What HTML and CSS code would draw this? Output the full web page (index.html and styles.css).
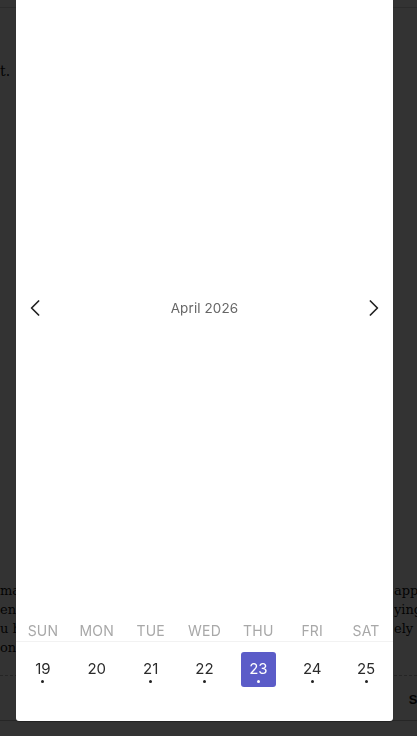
FILE: index.html
```html
<!DOCTYPE html>
<html lang="en">
<head>
<meta charset="utf-8">
<title>Calendar</title>
<link rel="stylesheet" href="styles.css">
</head>
<body>
<div class="page">
  <div class="page-top"></div>
  <div class="page-lead"><span>t.</span></div>
  <div class="page-text">
    <div class="line"><span class="l">may</span><span class="r">applied</span></div>
    <div class="line"><span class="l">ent</span><span class="r">ying</span></div>
    <div class="line"><span class="l">u ha</span><span class="r">ely by</span></div>
    <div class="line"><span class="l">on a</span><span class="r"></span></div>
  </div>
  <div class="page-rule"></div>
  <div class="page-action"><span>Save</span></div>
  <div class="page-bottom"></div>
</div>

<div class="overlay">
  <div class="sheet">
    <div class="month-area">
      <div class="month-header">
        <button class="nav" aria-label="Previous month">
          <svg width="10" height="16" viewBox="0 0 10 16"><path d="M8.6 1 L1.6 8 L8.6 15" fill="none" stroke="#222" stroke-width="1.7" stroke-linecap="round" stroke-linejoin="round"/></svg>
        </button>
        <div class="month-title">April 2026</div>
        <button class="nav" aria-label="Next month">
          <svg width="10" height="16" viewBox="0 0 10 16"><path d="M1.4 1 L8.4 8 L1.4 15" fill="none" stroke="#222" stroke-width="1.7" stroke-linecap="round" stroke-linejoin="round"/></svg>
        </button>
      </div>
    </div>
    <div class="weekdays">
      <span>SUN</span><span>MON</span><span>TUE</span><span>WED</span><span>THU</span><span>FRI</span><span>SAT</span>
    </div>
    <div class="week">
      <div class="day"><span class="num">19</span><span class="dot"></span></div>
      <div class="day"><span class="num">20</span><span class="dot none"></span></div>
      <div class="day"><span class="num">21</span><span class="dot"></span></div>
      <div class="day"><span class="num">22</span><span class="dot"></span></div>
      <div class="day selected"><span class="num">23</span><span class="dot"></span></div>
      <div class="day"><span class="num">24</span><span class="dot"></span></div>
      <div class="day"><span class="num">25</span><span class="dot"></span></div>
    </div>
  </div>
</div>
</body>
</html>
```

FILE: styles.css
```css
* { box-sizing: border-box; }

html, body {
  margin: 0;
  padding: 0;
  width: 417px;
  height: 736px;
  overflow: hidden;
  background: #ffffff;
}

.page {
  width: 417px;
  height: 736px;
  display: flex;
  flex-direction: column;
  font-family: "DejaVu Serif", "Liberation Serif", serif;
  color: #111;
  font-size: 13px;
}

.page-top {
  height: 8px;
  border-bottom: 1px solid #d8d8d8;
  flex: none;
}

.page-lead {
  height: 73px;
  display: flex;
  align-items: flex-end;
  font-size: 14px;
  line-height: 20px;
}

.page-text {
  margin-top: 500px;
  display: flex;
  flex-direction: column;
}

.line {
  display: flex;
  height: 19px;
  line-height: 19px;
  white-space: nowrap;
}

.line .l {
  width: 16px;
  overflow: hidden;
}

.line .r {
  margin-left: auto;
  width: 23px;
  overflow: hidden;
}

.page-rule {
  margin-top: 18px;
  border-top: 1px dashed #bbb;
  height: 0;
}

.page-action {
  height: 44px;
  display: flex;
  align-items: center;
  justify-content: flex-end;
  padding-top: 2px;
  font-family: "Liberation Sans", Arial, sans-serif;
  font-weight: 700;
  font-size: 13px;
  margin-right: -22px;
}

.page-bottom {
  margin-top: auto;
  height: 16px;
  border-top: 1px solid #bcbcbc;
}

.overlay {
  position: fixed;
  inset: 0;
  background: rgba(0, 0, 0, 0.8);
  display: flex;
  justify-content: flex-start;
  align-items: flex-start;
  font-family: Inter, "Noto Sans", Roboto, sans-serif;
}

.sheet {
  width: 377px;
  height: 721px;
  margin-left: 16px;
  background: #fff;
  border-radius: 0 0 3px 3px;
  box-shadow: 0 1px 1px rgba(0, 0, 0, 0.35);
  display: flex;
  flex-direction: column;
}

.month-area {
  flex: 1;
  display: flex;
  align-items: center;
}

.month-header {
  width: 100%;
  height: 30px;
  padding: 0 13px;
  display: flex;
  align-items: center;
  justify-content: space-between;
}

.nav {
  width: 12px;
  height: 18px;
  padding: 0;
  border: 0;
  background: none;
  display: flex;
  align-items: center;
  justify-content: center;
}

.month-title {
  font-size: 13.5px;
  color: #666;
  letter-spacing: 0.1px;
}

.weekdays {
  height: 26px;
  padding-top: 3px;
  border-bottom: 1px solid #f2f2f2;
  display: grid;
  grid-template-columns: repeat(7, 1fr);
  align-items: center;
  text-align: center;
  font-size: 14px;
  color: #a8a8a8;
  letter-spacing: 0.2px;
  flex: none;
}

.week {
  height: 79px;
  padding-top: 10px;
  display: grid;
  grid-template-columns: repeat(7, 1fr);
  align-items: start;
  justify-items: center;
  flex: none;
}

.day {
  width: 35px;
  height: 35px;
  border-radius: 3px;
  display: flex;
  flex-direction: column;
  align-items: center;
  padding-top: 8px;
}

.day .num {
  font-size: 15px;
  line-height: 18px;
  color: #2b2b2b;
}

.day .dot {
  margin-top: 2px;
  width: 3px;
  height: 3px;
  border-radius: 50%;
  background: #222;
}

.day .dot.none {
  visibility: hidden;
}

.day.selected {
  background: #5b5cc8;
}

.day.selected .num {
  color: #fff;
}

.day.selected .dot {
  background: #fff;
}
```
